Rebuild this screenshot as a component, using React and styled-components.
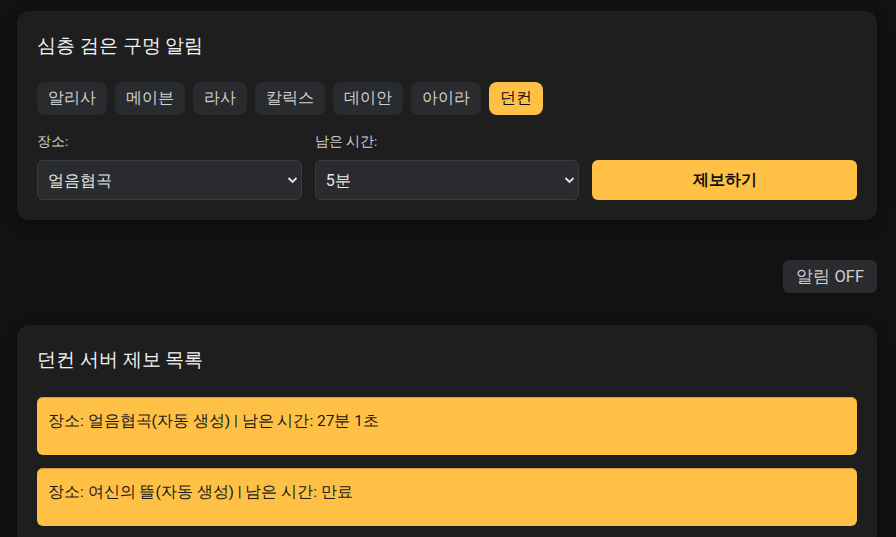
import React from "react";
import styled, { createGlobalStyle } from "styled-components";

const Global = createGlobalStyle`
  html, body { margin: 0; padding: 0; background: #121212; }
  body {
    font-family: Roboto, sans-serif;
    color: #ececec;
  }
  * { box-sizing: border-box; }
`;

const Page = styled.div`
  padding: 11px 19px 20px 17px;
  display: flex;
  flex-direction: column;
`;

const Card = styled.section`
  background: #1e1e1e;
  border-radius: 12px;
  padding: 20px;
  box-shadow: 0 4px 12px rgba(0, 0, 0, 0.35);
`;

const Title = styled.h2`
  margin: 0 0 ${(p) => p.$gap || 21}px;
  font-size: 19.2px;
  font-weight: 400;
  line-height: 30px;
  color: #f2f2f2;
`;

const Tabs = styled.div`
  display: flex;
  gap: 8px;
  margin-bottom: 16px;
`;

const Tab = styled.button`
  height: 33px;
  padding: 0 11px;
  border: none;
  border-radius: 8px;
  font-family: inherit;
  font-size: 16px;
  background: ${(p) => (p.$active ? "#ffc145" : "#2a2b2f")};
  color: ${(p) => (p.$active ? "#111" : "#d0d0d0")};
`;

const FormGrid = styled.div`
  display: grid;
  grid-template-columns: 1fr 1fr 1fr;
  column-gap: 13px;
  row-gap: 9px;
`;

const Label = styled.label`
  font-size: 13.5px;
  color: #cfcfcf;
  line-height: 20px;
`;

const SelectWrap = styled.div`
  position: relative;
  height: 40px;
`;

const Select = styled.select`
  width: 100%;
  height: 40px;
  appearance: none;
  background: #2a2b2f;
  border: 1px solid #3b3c40;
  border-radius: 6px;
  color: #e6e6e6;
  font-family: inherit;
  font-size: 16px;
  padding: 0 30px 0 10px;
`;

const Chevron = styled.svg`
  position: absolute;
  right: 4px;
  top: 15px;
  pointer-events: none;
`;

const Submit = styled.button`
  height: 40px;
  border: none;
  border-radius: 6px;
  background: #ffc145;
  color: #111;
  font-family: inherit;
  font-weight: 700;
  font-size: 16px;
`;

const ToggleRow = styled.div`
  display: flex;
  justify-content: flex-end;
  margin: 40px 0 32px;
`;

const Toggle = styled.button`
  height: 33px;
  padding: 0 13px;
  border: none;
  border-radius: 6px;
  background: #2a2b2f;
  color: #cfcfcf;
  font-family: inherit;
  font-size: 16.5px;
`;

const List = styled.div`
  display: flex;
  flex-direction: column;
  gap: 13px;
`;

const Item = styled.div`
  background: #ffc145;
  color: #1a1a1a;
  border-radius: 6px;
  height: 58px;
  padding: 12px 11px;
  font-size: 15.5px;
  line-height: 24px;
  box-shadow: inset 0 1px 0 #d9a030, 0 0 1px rgba(0, 0, 0, 0.6);
`;

const Arrow = () => (
  <Chevron width="11" height="10" viewBox="0 0 11 10">
    <path d="M1.5 3 L5.5 7 L9.5 3" fill="none" stroke="#e6e6e6" strokeWidth="1.8" />
  </Chevron>
);

const servers = ["알리사", "메이븐", "라사", "칼릭스", "데이안", "아이라", "던컨"];

export default function App() {
  return (
    <>
      <Global />
      <Page>
        <Card>
          <Title>심층 검은 구멍 알림</Title>
          <Tabs>
            {servers.map((s) => (
              <Tab key={s} $active={s === "던컨"}>{s}</Tab>
            ))}
          </Tabs>
          <FormGrid>
            <Label>장소:</Label>
            <Label>남은 시간:</Label>
            <span />
            <SelectWrap>
              <Select defaultValue="얼음협곡">
                <option>얼음협곡</option>
                <option>여신의 뜰</option>
              </Select>
              <Arrow />
            </SelectWrap>
            <SelectWrap>
              <Select defaultValue="5분">
                <option>5분</option>
                <option>10분</option>
              </Select>
              <Arrow />
            </SelectWrap>
            <Submit>제보하기</Submit>
          </FormGrid>
        </Card>
        <ToggleRow>
          <Toggle>알림 OFF</Toggle>
        </ToggleRow>
        <Card>
          <Title $gap={22}>던컨 서버 제보 목록</Title>
          <List>
            <Item>장소: 얼음협곡(자동 생성) | 남은 시간: 27분 1초</Item>
            <Item>장소: 여신의 뜰(자동 생성) | 남은 시간: 만료</Item>
          </List>
        </Card>
      </Page>
    </>
  );
}
